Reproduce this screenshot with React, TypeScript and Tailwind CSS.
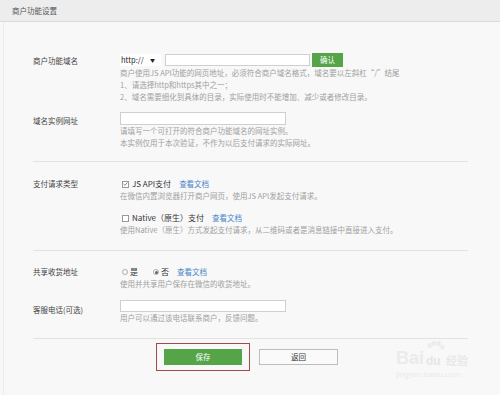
import React from "react";

const help = "text-[7.5px] leading-[12px] text-[#a0a0a0]";
const label = "w-[87px] shrink-0 text-[7.5px] text-[#444]";
const link = "text-[7.5px] text-[#4a86c8]";

function Check({ on }: { on?: boolean }) {
  return (
    <span className="w-[7px] h-[7px] border border-[#999] bg-white flex items-center justify-center">
      {on ? (
        <svg viewBox="0 0 8 8" className="w-[6px] h-[6px]">
          <path d="M1 4.2 L3.2 6.2 L7 1.5" fill="none" stroke="#555" strokeWidth="1.2" />
        </svg>
      ) : null}
    </span>
  );
}

function Radio({ on }: { on?: boolean }) {
  return (
    <span className="w-[6px] h-[6px] rounded-full border border-[#aaa] bg-white flex items-center justify-center">
      {on ? <span className="w-[3px] h-[3px] rounded-full bg-[#666]" /> : null}
    </span>
  );
}

function Divider() {
  return <div className="h-px bg-[#e2e2e2]" />;
}

export default function App() {
  return (
    <div className="w-[500px] h-[395px] bg-[#f8f8f8] relative overflow-hidden font-['Noto_Sans_CJK_SC',sans-serif]">
      <div className="absolute left-[3px] top-[22px] bottom-0 w-px bg-[#ececec]" />
      <div className="h-[22px] bg-[#ededed] border-b border-[#dadada] flex items-center pl-[12px] text-[7.5px] text-[#555]">
        商户功能设置
      </div>

      <div className="pl-[33px] pr-[32px] pt-[31px]">
        {/* domain */}
        <div className="flex">
          <div className={label + " h-[14px] leading-[16px]"}>商户功能域名</div>
          <div className="flex-1">
            <div className="flex items-center h-[14px]">
              <div className="w-[41px] h-[12px] bg-white flex items-center justify-between px-[1px] text-[7.5px] text-[#222]">
                <span>http://</span>
                <span className="text-[5px] pr-[5px]">▼</span>
              </div>
              <div className="ml-[4px] w-[145px] h-[12px] bg-white border border-[#cfcfcf]" />
              <div className="ml-[2px] w-[31px] h-[14px] bg-[#55a447] text-white text-[7.5px] flex items-center justify-center">
                确认
              </div>
            </div>
            <div className={help + " leading-[12.5px]"}>
              <div>商户使用JS API功能的网页地址，必须符合商户域名格式，域名要以左斜杠“/”结尾</div>
              <div>1、请选择http和https其中之一；</div>
              <div>2、域名需要细化到具体的目录，实际使用时不能增加、减少或者修改目录。</div>
            </div>
          </div>
        </div>

        <div className="flex mt-[9px]">
          <div className={label + " h-[13px] leading-[17px]"}>域名实例网址</div>
          <div className="flex-1">
            <div className="w-[166px] h-[13px] bg-white border border-[#cfcfcf]" />
            <div className={help}>
              <div>请填写一个可打开的符合商户功能域名的网址实例。</div>
              <div>本实例仅用于本次验证，不作为以后支付请求的实际网址。</div>
            </div>
          </div>
        </div>

        <div className="mt-[12px]">
          <Divider />
        </div>

        {/* pay type */}
        <div className="flex mt-[16px]">
          <div className={label + " h-[12px] leading-[12px]"}>支付请求类型</div>
          <div className="flex-1">
            <div className="flex items-center h-[12px] pl-[2px]">
              <Check on />
              <span className="ml-[3px] text-[8px] text-[#333]">JS API支付</span>
              <span className={link + " ml-[8px]"}>查看文档</span>
            </div>
            <div className={help}>在微信内置浏览器打开商户网页，使用JS API发起支付请求。</div>
            <div className="flex items-center h-[12px] pl-[2px] mt-[10px]">
              <Check />
              <span className="ml-[3px] text-[8px] text-[#333]">Native（原生）支付</span>
              <span className={link + " ml-[8px]"}>查看文档</span>
            </div>
            <div className={help}>使用Native（原生）方式发起支付请求，从二维码或者是消息链接中直接进入支付。</div>
          </div>
        </div>

        <div className="mt-[14px]">
          <Divider />
        </div>

        {/* address */}
        <div className="flex mt-[15px]">
          <div className={label + " h-[12px] leading-[12px]"}>共享收货地址</div>
          <div className="flex-1">
            <div className="flex items-center h-[12px] pl-[2px]">
              <Radio />
              <span className="ml-[2px] text-[8px] text-[#333]">是</span>
              <span className="ml-[15px]">
                <Radio on />
              </span>
              <span className="ml-[2px] text-[8px] text-[#333]">否</span>
              <span className={link + " ml-[8px]"}>查看文档</span>
            </div>
            <div className={help}>使用并共享用户保存在微信的收货地址。</div>
          </div>
        </div>

        <div className="flex mt-[10px]">
          <div className={label + " h-[12px] leading-[20px]"}>客服电话(可选)</div>
          <div className="flex-1">
            <div className="w-[166px] h-[12px] bg-white border border-[#cfcfcf]" />
            <div className={help}>用户可以通过该电话联系商户，反馈问题。</div>
          </div>
        </div>

        <div className="mt-[14px]">
          <Divider />
        </div>

        <div className="flex items-center mt-[4px] pl-[123px]">
          <div className="w-[94px] h-[28px] border border-[#a24a45] flex items-center justify-center">
            <div className="w-[78px] h-[16px] bg-[#55a447] text-white text-[7.5px] flex items-center justify-center">
              保存
            </div>
          </div>
          <div className="ml-[9px] w-[79px] h-[16px] bg-[#fafafa] border border-[#bdbdbd] text-[#333] text-[7.5px] flex items-center justify-center">
            返回
          </div>
        </div>
      </div>

      {/* watermark */}
      <div className="absolute left-[396px] top-[340px] w-[100px] pointer-events-none select-none whitespace-nowrap">
        <div className="flex items-end h-[28px]">
          <span className="text-[18px] leading-[20px] font-bold text-[#ebebeb] font-['Liberation_Sans',sans-serif]">Bai</span>
          <span className="relative ml-[1px] w-[20px] h-[20px] shrink-0">
            <svg viewBox="0 0 22 22" className="absolute left-0 top-[-8px] w-[20px] h-[20px]">
              <g fill="#ececec">
                <ellipse cx="5" cy="6" rx="2.4" ry="3" />
                <ellipse cx="10" cy="3.5" rx="2.4" ry="3" />
                <ellipse cx="15" cy="4" rx="2.4" ry="3" />
                <ellipse cx="19" cy="8" rx="2.2" ry="2.8" />
              </g>
            </svg>
            <span className="absolute left-[1px] bottom-0 text-[12px] leading-[14px] font-bold text-[#e6e6e6] font-['Liberation_Sans',sans-serif]">du</span>
          </span>
          <span className="ml-[1px] text-[11px] leading-[16px] font-bold text-[#e8e8e8]">经验</span>
        </div>
        <div className="mt-[2px] text-[8px] leading-[10px] text-[#ebebeb] font-['Liberation_Sans',sans-serif]">jingyan.baidu.com</div>
      </div>
    </div>
  );
}
